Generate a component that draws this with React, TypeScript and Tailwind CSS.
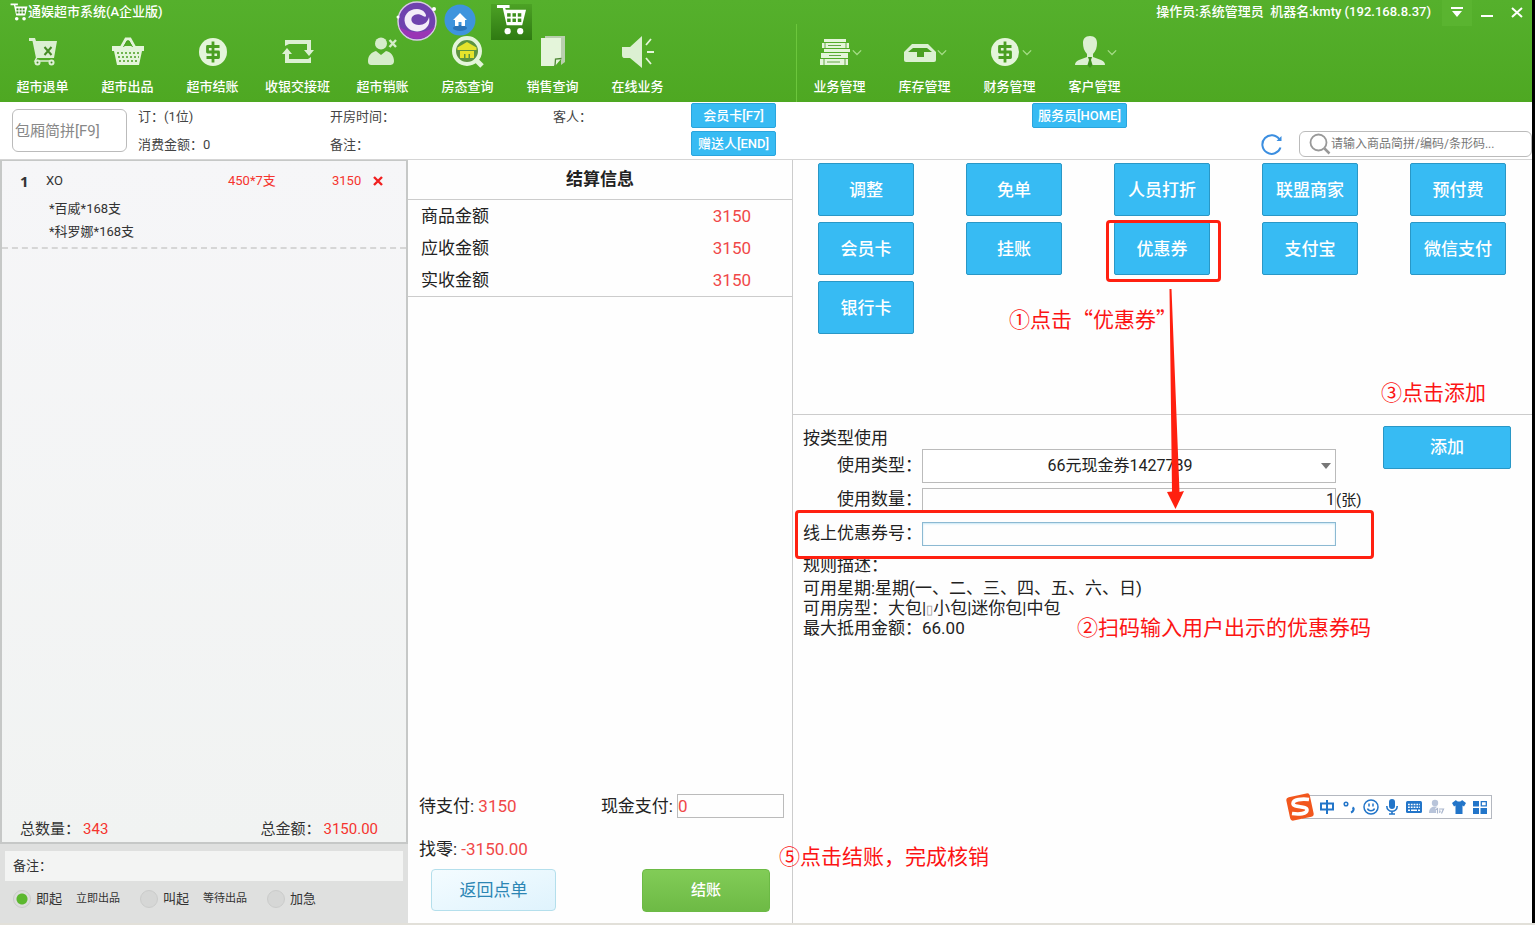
import { useState, type ReactNode } from 'react';

interface ToolItem {
  label: string;
  icon: ReactNode;
}

const CartIcon = ({ className = '' }: { className?: string }) => (
  <svg viewBox="0 0 32 32" className={className} fill="currentColor">
    <path d="M1 1h13v3H9.500l.6 2H31l-4 16H11L7 4H1z" />
    <circle cx="12" cy="28" r="3.200" />
    <circle cx="25" cy="28" r="3.200" />
    <g fill="#3d8f1c">
      {[11.5, 17, 22.5].map((x) => (
        <g key={x}>
          <rect x={x} y="9.500" width="3.600" height="3.600" />
          <rect x={x} y="15" width="3.600" height="3.600" />
        </g>
      ))}
    </g>
  </svg>
);

const CoinIcon = () => (
  <svg viewBox="0 0 34 34" className="size-[34px]">
    <circle cx="17" cy="17" r="14" fill="#e4f5da" />
    <path d="M23.500 11.500h-12V17h11v5.500h-12M17 6.500v21" fill="none" stroke="#4a9f22" strokeWidth="2.800" strokeLinejoin="round" />
  </svg>
);

const leftTools: ToolItem[] = [
  {
    label: '超市退单',
    icon: (
      <svg viewBox="0 0 34 34" className="size-[34px]">
        <path d="M3 3h6l1 3h21l-3 17H10L6.500 6H3z" fill="#dcf0d2" />
        <path d="M18.500 12l7 8M25.500 12l-7 8" stroke="#468c25" strokeWidth="2" />
        <path d="M11 22l-2 4h18" stroke="#dcf0d2" strokeWidth="1.500" fill="none" />
        <circle cx="11.500" cy="27.500" r="3" fill="#dcf0d2" />
        <circle cx="25.500" cy="27.500" r="3" fill="#dcf0d2" />
        <circle cx="11.500" cy="27.500" r="1" fill="#468c25" />
        <circle cx="25.500" cy="27.500" r="1" fill="#468c25" />
      </svg>
    ),
  },
  {
    label: '超市出品',
    icon: (
      <svg viewBox="0 0 34 34" className="size-[34px]">
        <path d="M1 11h32v5h-2l-3 14H6L3 16H1z" fill="#e4f5da" />
        <path d="M10 13l5-9h4l5 9" fill="none" stroke="#e4f5da" strokeWidth="3" />
        <path d="M12.500 12l3.500-6h2l3.500 6" fill="none" stroke="#4a9f22" strokeWidth="1" />
        <path d="M6 18h23M7 22h21M8 26h19" stroke="#4a9f22" strokeWidth="1.600" strokeDasharray="2 2" />
      </svg>
    ),
  },
  { label: '超市结账', icon: <CoinIcon /> },
  {
    label: '收银交接班',
    icon: (
      <svg viewBox="0 0 34 34" className="size-[34px]" fill="#dcf0d2">
        <path d="M4 5h26v10h3l-5 6-5-6h3V9H8L4 11z" />
        <path d="M30 28H4V19H1l5-6 5 6H8v5h19l3-2z" />
      </svg>
    ),
  },
  {
    label: '超市销账',
    icon: (
      <svg viewBox="0 0 34 34" className="size-[34px]" fill="#d6edca">
        <circle cx="15" cy="8.500" r="6" />
        <path d="M2 26c0-6 4-9 8-10l5 4 5-4c5 1 8 5 8 10 0 4-3 4-5 4H7c-3 0-5 0-5-4z" />
        <path d="M23.500 5l6.500 7M30 5l-6.500 7" stroke="#d6edca" strokeWidth="2.400" />
      </svg>
    ),
  },
  {
    label: '房态查询',
    icon: (
      <svg viewBox="0 0 34 34" className="size-[34px]">
        <circle cx="16" cy="16" r="13" fill="#5d9440" stroke="#e4f5da" strokeWidth="4" />
        <path d="M25 25l6 6" stroke="#e4f5da" strokeWidth="5" />
        <path d="M6.500 15v-2.500L16 7l9.500 5.500V15z" fill="#e5e32c" />
        <path d="M9 16h14v7h-4v-4h-1.500v4h-3v-4H13v4H9z" fill="#e5e32c" />
      </svg>
    ),
  },
  {
    label: '销售查询',
    icon: (
      <svg viewBox="0 0 34 34" className="size-[34px]">
        <path d="M9 1h20v26l-4 3V4H9z" fill="#b9cfae" />
        <path d="M5 3h20v20l-7 8H5z" fill="#e4f5da" />
        <path d="M25.500 23.500l-6 .5-.5 7" fill="#e4f5da" stroke="#4c8632" strokeWidth="1.300" />
      </svg>
    ),
  },
  {
    label: '在线业务',
    icon: (
      <svg viewBox="0 0 34 34" className="size-[34px]">
        <path d="M1 12h8L21 1v32L9 23H4c-3 0-3-2-3-4z" fill="#dcf0d2" />
        <path d="M25 10l5-6M26 17h7M25 23l5 6" stroke="#e4f5da" strokeWidth="1.800" />
      </svg>
    ),
  },
];

const rightTools: ToolItem[] = [
  {
    label: '业务管理',
    icon: (
      <svg viewBox="0 0 34 34" className="size-[34px]" fill="#e4f5da">
        <path d="M6 4h22v3H6zM4 8h27v5H4zM6 14h26v3H6zM3 18h27v5H3zM2 24h28v6H2z" />
        <path d="M10 10.500h13M11 20.500h12M9 27h13M6 24v6M27 24v6M7 8v5M28 8v5" stroke="#63a644" strokeWidth="1" />
      </svg>
    ),
  },
  {
    label: '库存管理',
    icon: (
      <svg viewBox="0 0 34 34" className="size-[34px]">
        <path d="M9 9h16l8 8v8q0 2-2 2H3q-2 0-2-2v-8z" fill="#dcf0d2" />
        <path d="M10 13h14l5 4h-8v5h-7v-5H5z" fill="#4a9f22" />
      </svg>
    ),
  },
  { label: '财务管理', icon: <CoinIcon /> },
  {
    label: '客户管理',
    icon: (
      <svg viewBox="0 0 34 34" className="size-[34px]">
        <path d="M17 1c5 0 7 3 7 7s-1 8-4 11v3l8 3c3 1 4 3 4 5H2c0-2 1-4 4-5l8-3v-3c-3-3-4-7-4-11s2-7 7-7z" fill="#dcf0d2" />
        <path d="M15 22h4l-1 3 1.500 5-2.500 3-2.500-3 1.500-5z" fill="#3d8f1c" />
      </svg>
    ),
  },
];

const payMethods = [
  '调整', '免单', '人员打折', '联盟商家', '预付费',
  '会员卡', '挂账', '优惠券', '支付宝', '微信支付',
  '银行卡',
];

const serveModes = [
  { id: 'now', label: '即起', hint: '立即出品' },
  { id: 'call', label: '叫起', hint: '等待出品' },
  { id: 'rush', label: '加急', hint: '' },
];

const settlement = [
  { label: '商品金额', value: '3150' },
  { label: '应收金额', value: '3150' },
  { label: '实收金额', value: '3150' },
];

function ToolButton({ item, menu }: { item: ToolItem; menu?: boolean }) {
  return (
    <button className="flex w-[85px] flex-col items-center gap-2">
      <span className="flex items-center">
        {item.icon}
        {menu && (
          <svg viewBox="0 0 12 12" className="size-[10px]" fill="none" stroke="#a5dc86" strokeWidth="1.500">
            <path d="M1 4l5 5 5-5" />
          </svg>
        )}
      </span>
      <span className="text-[13px] leading-5 font-medium">{item.label}</span>
    </button>
  );
}

function Header() {
  return (
    <header className="relative bg-linear-to-b from-[#55b02c] to-[#4ea822] text-white">
      <div className="flex h-6 items-center pl-[10px]">
        <CartIcon className="size-[18px]" />
        <h1 className="text-[13px] font-medium">通娱超市系统(A企业版)</h1>
        <p className="ml-auto pr-[11px] text-[13px] font-medium whitespace-pre">操作员:系统管理员  机器名:kmty (192.168.8.37)</p>
        <button aria-label="菜单" className="flex h-7 w-[30px] items-center justify-center bg-[#5ab430]">
          <svg viewBox="0 0 12 12" className="size-3" fill="currentColor">
            <path d="M0 1h12v2H0zM1 5h10l-5 6z" />
          </svg>
        </button>
        <button aria-label="最小化" className="flex h-6 w-[30px] items-center justify-center">
          <svg viewBox="0 0 12 12" className="size-3" fill="currentColor">
            <path d="M0 9h12v2H0z" />
          </svg>
        </button>
        <button aria-label="关闭" className="flex h-6 w-[30px] items-center justify-center">
          <svg viewBox="0 0 12 12" className="size-3" stroke="currentColor" strokeWidth="2">
            <path d="M1 2l10 9M11 2L1 11" />
          </svg>
        </button>
      </div>
      <div className="flex">
        <nav className="flex w-[796px] pt-[11px] pb-[5px]">
          {leftTools.map((item) => (
            <ToolButton key={item.label} item={item} />
          ))}
        </nav>
        <nav className="flex border-l border-[#6cc63c] pt-[11px] pb-[5px]">
          {rightTools.map((item) => (
            <ToolButton key={item.label} item={item} menu />
          ))}
        </nav>
      </div>

      {/* floating shortcuts */}
      <div className="absolute top-0 left-[396px] flex items-start">
        <svg viewBox="0 0 42 42" className="size-[42px]">
          <circle cx="21" cy="21" r="19" fill="#6f42ae" stroke="#d9c9e6" strokeWidth="1.500" />
          <path d="M3 26a19 19 0 0 0 36 0c-9 8-27 8-36 0z" fill="#9a35b5" />
          <path d="M21 9C12 9 7 16 9 23c2 8 13 11 20 6 4-3 5-7 4-12-1 5-5 8-10 8-6 0-9-4-7-8 2-3 7-4 11-1 3 2 4 0 2-3-2-3-5-4-8-4z" fill="#f3ecf8" />
          <circle cx="38" cy="9" r="2" fill="#fff" />
          <circle cx="2" cy="17" r="1.500" fill="#fff" />
        </svg>
        <svg viewBox="0 0 32 32" className="mt-1 ml-[6px] size-8">
          <circle cx="16" cy="16" r="15.500" fill="#3e94dd" />
          <ellipse cx="16" cy="24" rx="7" ry="3" fill="#2a74b8" />
          <path d="M16 9l7 7h-2v6h-3.500v-4h-3v4H11v-6H9z" fill="#fff" />
        </svg>
        <div className="mt-1 ml-[15px] flex h-9 w-[41px] justify-center bg-linear-to-b from-[#4ca225] to-[#2f7a12]">
          <CartIcon className="size-[31px]" />
        </div>
      </div>
    </header>
  );
}

function InfoBar() {
  return (
    <div className="flex h-[58px] border-b border-[#d5d5d5] bg-white text-[13px] text-[#444]">
      <input
        aria-label="包厢简拼"
        placeholder="包厢简拼[F9]"
        className="mt-[7px] ml-3 h-[43px] w-[115px] rounded-md border border-[#bbb] px-[2px] text-[15px] placeholder:text-[#888]"
      />
      <div className="ml-[11px] w-48 pt-px leading-7">
        <p>订：(1位)</p>
        <p>消费金额：0</p>
      </div>
      <div className="w-[223px] pt-px leading-7">
        <p>开房时间：</p>
        <p>备注：</p>
      </div>
      <p className="w-[138px] pt-px leading-7">客人：</p>
      <div className="flex w-[85px] flex-col gap-[3px] pt-px font-medium text-white">
        <button className="h-[25px] rounded-xs border border-[#2aa5dd] bg-[#37bbf3]">会员卡[F7]</button>
        <button className="h-[25px] rounded-xs border border-[#2aa5dd] bg-[#37bbf3]">赠送人[END]</button>
      </div>
      <button className="mt-px ml-64 h-[25px] w-[95px] rounded-xs border border-[#2aa5dd] bg-[#37bbf3] font-medium text-white">服务员[HOME]</button>
      <div className="ml-auto flex items-end gap-4 pb-[2px]">
        <button aria-label="刷新" className="mb-[2px]">
          <svg viewBox="0 0 22 22" className="size-[22px]" fill="none" stroke="#3b8ee0" strokeWidth="2">
            <path d="M19.500 14.500a9.300 9.300 0 1 1-1-8" />
            <path d="M20.500 3v5h-5z" fill="#3b8ee0" stroke="none" />
          </svg>
        </button>
        <label className="flex h-[26px] w-[233px] items-center rounded-md border border-[#bbb] pl-[9px]">
          <svg viewBox="0 0 22 22" className="size-[22px] shrink-0" fill="none" stroke="#999" strokeWidth="1.800">
            <circle cx="9.500" cy="9.500" r="8" />
            <path d="M15.500 15.500l5 5" strokeWidth="2.500" />
          </svg>
          <input aria-label="搜索商品" placeholder="请输入商品简拼/编码/条形码..." className="min-w-0 flex-1 text-xs placeholder:text-[#777]" />
        </label>
      </div>
    </div>
  );
}

function OrderPanel() {
  const [mode, setMode] = useState('now');
  return (
    <section className="flex flex-col bg-[#dfe0df] text-[#333]">
      <div className="flex flex-1 flex-col border-2 border-t border-[#c6c8c7] bg-linear-to-b from-[#f6f6f8] to-[#f1f3f2]">
        <div className="border-b-2 border-dashed border-[#d6d6d6] pt-2 pb-1 text-[13px]">
          <div className="flex h-6 items-center pr-[23px] pl-[18px]">
            <b className="w-[26px] font-['Open_Sans'] text-[15px]">1</b>
            <span>XO</span>
            <span className="ml-auto w-[104px] text-[#f5342e]">450*7支</span>
            <span className="w-[41px] text-[#f5342e]">3150</span>
            <button aria-label="删除">
              <svg viewBox="0 0 10 10" className="size-[10px]" stroke="#f02020" strokeWidth="2.400">
                <path d="M1 1l8 8M9 1L1 9" />
              </svg>
            </button>
          </div>
          <ul className="pt-1 pl-[47px] leading-[23px]">
            <li>*百威*168支</li>
            <li>*科罗娜*168支</li>
          </ul>
        </div>
        <div className="mt-auto flex justify-between pr-7 pb-[3px] pl-[18px] text-[15px] leading-5">
          <p>总数量：<span className="ml-[3px] text-[#f5342e]">343</span></p>
          <p>总金额：<span className="ml-[3px] text-[#f5342e]">3150.00</span></p>
        </div>
      </div>
      <label className="mx-[5px] mt-[7px] flex h-[30px] items-center bg-[#f3f4f3] pl-2 text-[13px]">
        备注：
        <input className="min-w-0 flex-1" />
      </label>
      <div className="flex h-[42px] items-center pb-[6px] pl-[13px]">
        {serveModes.map((m) => (
          <label key={m.id} className="flex w-[127px] items-center text-[13px]">
            <input
              type="radio"
              name="mode"
              checked={mode === m.id}
              onChange={() => setMode(m.id)}
              className="mr-[5px] size-[18px] appearance-none rounded-full border border-[#cbcccb] bg-[#d6d7d6] checked:bg-[radial-gradient(circle,#5cb82f_5px,#dcdddc_6px)]"
            />
            {m.label}
            <span className="ml-[14px] text-[11px]">{m.hint}</span>
          </label>
        ))}
      </div>
    </section>
  );
}

function SettlePanel() {
  const [cash, setCash] = useState('0');
  return (
    <section className="flex flex-col text-[17px] text-[#222]">
      <h2 className="border-b border-[#ccc] text-center leading-[39px] font-bold">结算信息</h2>
      <dl className="border-b border-[#ccc] pr-[41px] pl-[13px] leading-8">
        {settlement.map((row) => (
          <div key={row.label} className="flex justify-between">
            <dt>{row.label}</dt>
            <dd className="text-[#f04848]">{row.value}</dd>
          </div>
        ))}
      </dl>
      <div className="mt-auto flex items-center justify-between pr-2 pl-[11px]">
        <p>待支付: <span className="text-[#f04848]">3150</span></p>
        <label className="flex items-center gap-1">
          现金支付:
          <input value={cash} onChange={(e) => setCash(e.target.value)} className="h-6 w-[107px] border border-[#bbb] text-[#f04848]" />
        </label>
      </div>
      <p className="pt-[18px] pl-[11px] leading-6">找零: <span className="text-[#f04848]">-3150.00</span></p>
      <div className="flex justify-between pt-2 pr-[22px] pb-[11px] pl-[23px]">
        <button className="h-[42px] w-[125px] rounded-sm border border-[#b4dfec] bg-linear-to-br from-[#f4fcff] to-[#dff3fd] pt-[2px] text-[#2c86b4]">返回点单</button>
        <button className="h-[43px] w-32 rounded-sm border border-[#6cba45] bg-linear-to-b from-[#82cc57] to-[#6dba45] text-[15px] font-medium text-white">结账</button>
      </div>
    </section>
  );
}

function ImeBar() {
  return (
    <div className="absolute top-[633px] right-10 flex h-7 items-center">
      <svg viewBox="0 0 28 28" className="z-10 -mr-3 size-7">
        <rect x="2" y="2" width="24" height="24" rx="3" fill="#f2571d" transform="rotate(-12 14 14)" />
        <path d="M23 6.500C16 5.500 7 6.500 7 10.500c0 4.500 14 2 14 6.500 0 4-8 4.500-15 3.500" fill="none" stroke="#fff" strokeWidth="3.600" />
      </svg>
      <div className="flex h-6 w-[190px] items-center justify-between border border-[#b4b8c0] bg-white pr-1 pl-4 text-[#2275c9]">
        <svg viewBox="0 0 16 16" className="size-4" fill="none" stroke="currentColor" strokeWidth="2">
          <path d="M2 4.500h12v6H2zM8 1v14" />
        </svg>
        <svg viewBox="0 0 14 16" className="h-4 w-[14px]" fill="none" stroke="currentColor" strokeWidth="1.500">
          <circle cx="4" cy="5" r="1.800" />
          <path d="M10.500 8.500c2 1 1 4-1.500 5" strokeWidth="2.200" />
        </svg>
        <svg viewBox="0 0 16 16" className="size-4" fill="none" stroke="currentColor" strokeWidth="1.500">
          <circle cx="8" cy="8" r="7" />
          <path d="M6 4.500v3M10 4.500v3M4.500 9.500c1 3 6 3 7 0" />
        </svg>
        <svg viewBox="0 0 12 16" className="h-4 w-3" fill="currentColor">
          <rect x="3" y="0" width="6" height="10" rx="3" />
          <path d="M.8 7c0 7 10.400 7 10.400 0M6 12v3M3 15h6" fill="none" stroke="currentColor" strokeWidth="1.600" />
        </svg>
        <svg viewBox="0 0 16 12" className="h-3 w-4">
          <rect width="16" height="12" rx="1.500" fill="currentColor" />
          <path d="M2 3.500h12M2 6.200h12" stroke="#fff" strokeWidth="1.500" strokeDasharray="1.800 1" />
          <path d="M2 9.200h2M5 9.200h6M12 9.200h2" stroke="#fff" strokeWidth="1.500" />
        </svg>
        <svg viewBox="0 0 16 16" className="size-4">
          <circle cx="6" cy="4" r="3.200" fill="#b8c4da" />
          <path d="M0 14c0-5 3-6.500 6-6.500S12 9 12 14z" fill="#b8c4da" />
          <path d="M7 10.500l1.500-1v5M10.500 10h4l-2 4.500" fill="none" stroke="#fff" strokeWidth="3" />
          <path d="M7 10.500l1.500-1v5M10.500 10h4l-2 4.500" fill="none" stroke="#a9b5cc" strokeWidth="1.200" />
        </svg>
        <svg viewBox="0 0 14 14" className="size-[14px]" fill="currentColor">
          <path d="M4 0c1 2 5 2 6 0l4 3-2 3.500-1.500-1V14h-7V5.500l-1.500 1L0 3z" />
        </svg>
        <svg viewBox="0 0 14 14" className="size-[14px]" fill="currentColor">
          <path d="M0 1h6v5.500H0zM0 8h6v6H0zM7.500 8H14v6H7.500z" />
          <path d="M8.300 1.700h5v4.200h-5z" fill="none" stroke="currentColor" strokeWidth="1.300" />
        </svg>
      </div>
    </div>
  );
}

function PayPanel() {
  const [count, setCount] = useState('1');
  const [code, setCode] = useState('');
  const note = "absolute whitespace-nowrap font-['Noto_Sans_CJK_SC',sans-serif] text-[21px] leading-7 font-normal text-[#fc1414]";

  return (
    <section className="relative flex flex-col border-l border-[#ccc] text-[17px] text-[#222]">
      <div className="flex h-[255px] flex-col border-b border-[#ccc] pt-[3px] pr-[26px] pl-[25px]">
        <div className="grid grid-cols-[repeat(5,96px)] justify-between gap-y-[6px]">
          {payMethods.map((name) => (
            <div key={name} className="relative">
              <button className="h-[53px] w-full rounded-xs border border-[#2997c6] bg-[#37bbf3] pt-[2px] font-medium text-white">{name}</button>
              {name === '优惠券' && (
                <span className="pointer-events-none absolute -top-[2px] -right-[11px] -bottom-[7px] -left-2 rounded-sm border-3 border-[#ff2010]" />
              )}
            </div>
          ))}
        </div>
      </div>

      <div className="flex pr-[21px] pl-[10px]">
        <div className="flex-1 pt-3">
          <h2 className="leading-[22px]">按类型使用</h2>
          <div className="grid h-[34px] grid-cols-[119px_1fr_47px] items-center">
            <label htmlFor="type" className="text-right">使用类型：</label>
            <div className="relative">
              <select id="type" className="h-[34px] w-full appearance-none border border-[#bbb] bg-white pr-[18px] text-[16px] [text-align-last:center]">
                <option>66元现金券1427789</option>
              </select>
              <svg viewBox="0 0 10 6" className="pointer-events-none absolute top-[14px] right-[5px] h-[6px] w-[10px]" fill="#777">
                <path d="M0 0h10L5 6z" />
              </svg>
            </div>
          </div>
          <div className="grid h-[34px] grid-cols-[119px_1fr_47px] items-center">
            <label htmlFor="count" className="text-right">使用数量：</label>
            <input id="count" value={count} onChange={(e) => setCount(e.target.value)} className="h-6 w-full border border-[#bbb] text-right text-[16px]" />
            <span className="text-[15px]">(张)</span>
          </div>
          <div className="relative grid h-[34px] grid-cols-[119px_1fr_47px] items-center">
            <label htmlFor="code" className="text-right">线上优惠券号：</label>
            <input id="code" value={code} onChange={(e) => setCode(e.target.value)} className="h-6 w-full border border-[#8cb9d2] shadow-[inset_0_1px_2px_#c5e6f5]" />
            <span className="pointer-events-none absolute -top-[7px] right-[9px] -bottom-2 -left-2 z-10 rounded-sm border-3 border-[#ff2010]" />
          </div>
          <div className="pt-1 leading-5">
            <p className="pb-[3px]">规则描述：</p>
            <p>可用星期:星期(一、二、三、四、五、六、日)</p>
            <p>可用房型：大包|<span className="text-[13px] leading-none text-[#999]">▯</span>小包|迷你包|中包</p>
            <p>最大抵用金额：66.00</p>
          </div>
        </div>
        <button className="mt-[11px] h-[43px] w-32 rounded-xs border border-[#2997c6] bg-[#37bbf3] font-medium text-white">添加</button>
      </div>

      {/* step notes */}
      <p className={`${note} top-36 left-[216px]`}>①点击“优惠券”</p>
      <p className={`${note} top-[452px] left-[284px]`}>②扫码输入用户出示的优惠券码</p>
      <p className={`${note} top-[217px] right-[46px]`}>③点击添加</p>
      <p className={`${note} top-[681px] -left-[14px]`}>⑤点击结账，完成核销</p>
      <svg viewBox="0 0 20 220" className="pointer-events-none absolute top-[129px] left-[373px] h-[220px] w-5" fill="#ff2010">
        <path d="M3.500 0h2L13.500 203l4.500-1-8.500 18L1 203l5-.5z" />
      </svg>
      <ImeBar />
    </section>
  );
}

export default function App() {
  return (
    <div className="flex min-h-screen flex-col bg-black font-[Roboto,'Noto_Sans_CJK_SC',sans-serif]">
      <div className="mr-[3px] flex flex-1 flex-col bg-[#fefefe]">
        <Header />
        <InfoBar />
        <main className="grid flex-1 grid-cols-[408px_384px_1fr]">
          <OrderPanel />
          <SettlePanel />
          <PayPanel />
        </main>
      </div>
      <div className="h-[2px] bg-[#e2e0d9]" />
    </div>
  );
}
